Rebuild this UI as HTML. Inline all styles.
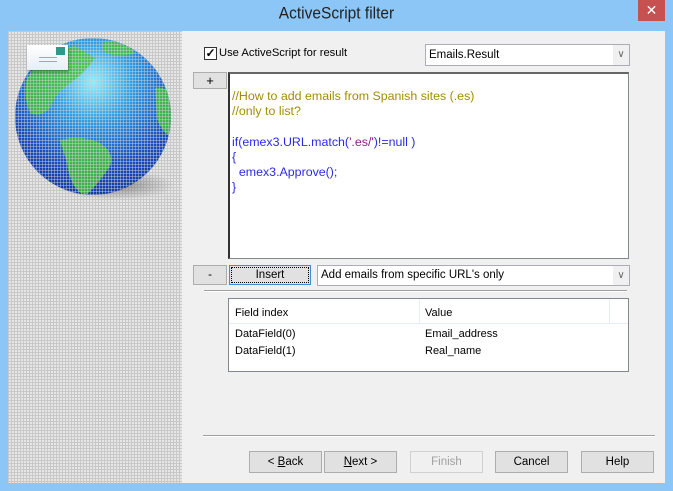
<!DOCTYPE html>
<html><head><meta charset="utf-8"><style>
*{margin:0;padding:0;box-sizing:border-box}
body{width:673px;height:491px;background:#8cc6f7;font-family:"Liberation Sans",sans-serif;font-size:11px;color:#000;position:relative;overflow:hidden}
.a{position:absolute}
.title{left:0;top:5px;width:673px;text-align:center;font-size:15.5px;color:#222;transform:scaleY(1.08)}
.close{left:638px;top:0;width:27px;height:21px;background:#c75050;color:#fff;text-align:center;font-size:14px;line-height:20px}
.client{left:8px;top:31px;width:657px;height:452px;background:#f0f0f0}
.left{left:8px;top:31px;width:174px;height:452px;background-color:#e6e6e6;background-image:linear-gradient(90deg,#c8c8c8 1px,transparent 1px),linear-gradient(#c8c8c8 1px,transparent 1px);background-size:3px 3px}
.btn{position:absolute;background:#e1e1e1;border:1px solid #adadad;text-align:center;line-height:20px;font-size:11.5px}
.combo{position:absolute;background:#fff;border:1px solid #abadb3;padding-left:3px;font-size:11.5px}
.arr{position:absolute;right:0;top:0;width:16px;height:100%;background:#f0f0f0;color:#666;font-size:10px;text-align:center}
.code{left:228px;top:72px;width:401px;height:187px;background:#fff;border:1px solid #828790;border-left:2px solid #333;border-top:2px solid #666;padding:15px 0 0 2px;line-height:15.2px;font-size:12.4px}
.c{color:#a38d00}.b{color:#2b2be8}.p{color:#8b1d8b}
.sep{height:2px;border-top:1px solid #a0a0a0;border-bottom:1px solid #fff}
</style></head><body>
<div class="a title">ActiveScript filter</div>
<div class="a close">✕</div>
<div class="a client"></div>
<div class="a left"></div>
<div class="a" style="left:15px;top:38px;width:160px;height:165px">
 <div class="a" style="left:40px;top:132px;width:120px;height:30px;border-radius:50%;background:radial-gradient(ellipse,rgba(90,90,90,.6),rgba(120,120,120,0) 70%)"></div>
 <div class="a" style="left:0;top:0;width:156px;height:157px;border-radius:50%;background:radial-gradient(circle at 50% 28%,#8ff0ff 0%,#2ea0e6 28%,#1a4fc0 62%,#0d2a8a 100%)"></div>
 <svg class="a" style="left:0;top:0" width="156" height="157" viewBox="0 0 156 157">
  <defs><clipPath id="g"><circle cx="78" cy="78.5" r="78"/></clipPath></defs>
  <g clip-path="url(#g)" fill="#45c33b" opacity=".85">
   <path d="M12 40 Q30 12 60 8 L80 20 Q70 35 55 45 Q40 55 35 70 Q25 80 15 75 Q8 60 12 40Z"/>
   <path d="M45 102 Q65 96 85 105 Q100 115 95 128 Q80 150 70 158 Q55 150 52 125Z"/>
   <path d="M140 50 Q156 48 160 65 L160 100 Q148 98 142 80Z"/>
   <path d="M85 5 Q110 0 120 15 Q105 20 90 15Z"/>
  </g>
 </svg>
 <div class="a" style="left:0;top:0;width:156px;height:157px;border-radius:50%;background-image:linear-gradient(90deg,rgba(210,210,210,.45) 1px,transparent 1px),linear-gradient(rgba(210,210,210,.45) 1px,transparent 1px);background-size:3px 3px"></div>
 <div class="a" style="left:12px;top:7px;width:41px;height:25px;background:linear-gradient(#fff,#e8eef4);box-shadow:1px 2px 3px rgba(0,0,0,.35)">
  <div class="a" style="left:29px;top:2px;width:9px;height:8px;background:#2a9a8a"></div>
  <div class="a" style="left:12px;top:12px;width:18px;height:1px;background:#9ab"></div>
  <div class="a" style="left:12px;top:16px;width:18px;height:1px;background:#9ab"></div>
 </div>
</div>
<div class="a" style="left:204px;top:47px;width:13px;height:13px;border:1px solid #333;background:#fff;font-size:12px;line-height:11px;text-align:center;font-weight:bold">✓</div>
<div class="a" style="left:219px;top:47px;font-size:11.2px">Use ActiveScript for result</div>
<div class="combo" style="left:425px;top:44px;width:205px;height:22px;line-height:20px">Emails.Result<div class="arr">∨</div></div>
<div class="btn" style="left:193px;top:72px;width:34px;height:17px;line-height:15px;font-size:13px">+</div>
<div class="a code"><span class="c">//How to add emails from Spanish sites (.es)<br>//only to list?</span><br><br><span class="b">if(emex3.URL.match(</span><span class="p">'.es/'</span><span class="b">)!=null )<br>{<br>&nbsp; emex3.Approve();<br>}</span></div>
<div class="btn" style="left:193px;top:265px;width:34px;height:20px;line-height:18px">-</div>
<div class="btn" style="left:229px;top:265px;width:82px;height:20px;line-height:18px;border-color:#3c8be0;outline:1px dotted #000;outline-offset:-3px">Insert</div>
<div class="combo" style="left:317px;top:265px;width:313px;height:21px;line-height:19px">Add emails from specific URL's only<div class="arr">∨</div></div>
<div class="a sep" style="left:204px;top:290px;width:423px"></div>
<div class="a" style="left:228px;top:298px;width:401px;height:74px;background:#fff;border:1px solid #828790">
 <div class="a" style="left:0;top:0;width:399px;height:25px;border-bottom:1px solid #e5eef6"></div>
 <div class="a" style="left:190px;top:0;width:1px;height:25px;background:#e5eef6"></div>
 <div class="a" style="left:380px;top:0;width:1px;height:25px;background:#e5eef6"></div>
 <div class="a" style="left:6px;top:8px">Field index</div><div class="a" style="left:196px;top:8px">Value</div>
 <div class="a" style="left:6px;top:29px">DataField(0)</div><div class="a" style="left:196px;top:29px">Email_address</div>
 <div class="a" style="left:6px;top:46px">DataField(1)</div><div class="a" style="left:196px;top:46px">Real_name</div>
</div>
<div class="a sep" style="left:203px;top:435px;width:452px"></div>
<div class="btn" style="left:249px;top:451px;width:73px;height:22px">&lt; <u>B</u>ack</div>
<div class="btn" style="left:324px;top:451px;width:73px;height:22px"><u>N</u>ext &gt;</div>
<div class="btn" style="left:410px;top:451px;width:73px;height:22px;color:#a0a0a0;background:#f0f0f0;border-color:#d0d0d0">Finish</div>
<div class="btn" style="left:495px;top:451px;width:73px;height:22px">Cancel</div>
<div class="btn" style="left:581px;top:451px;width:73px;height:22px">Help</div>
</body></html>
